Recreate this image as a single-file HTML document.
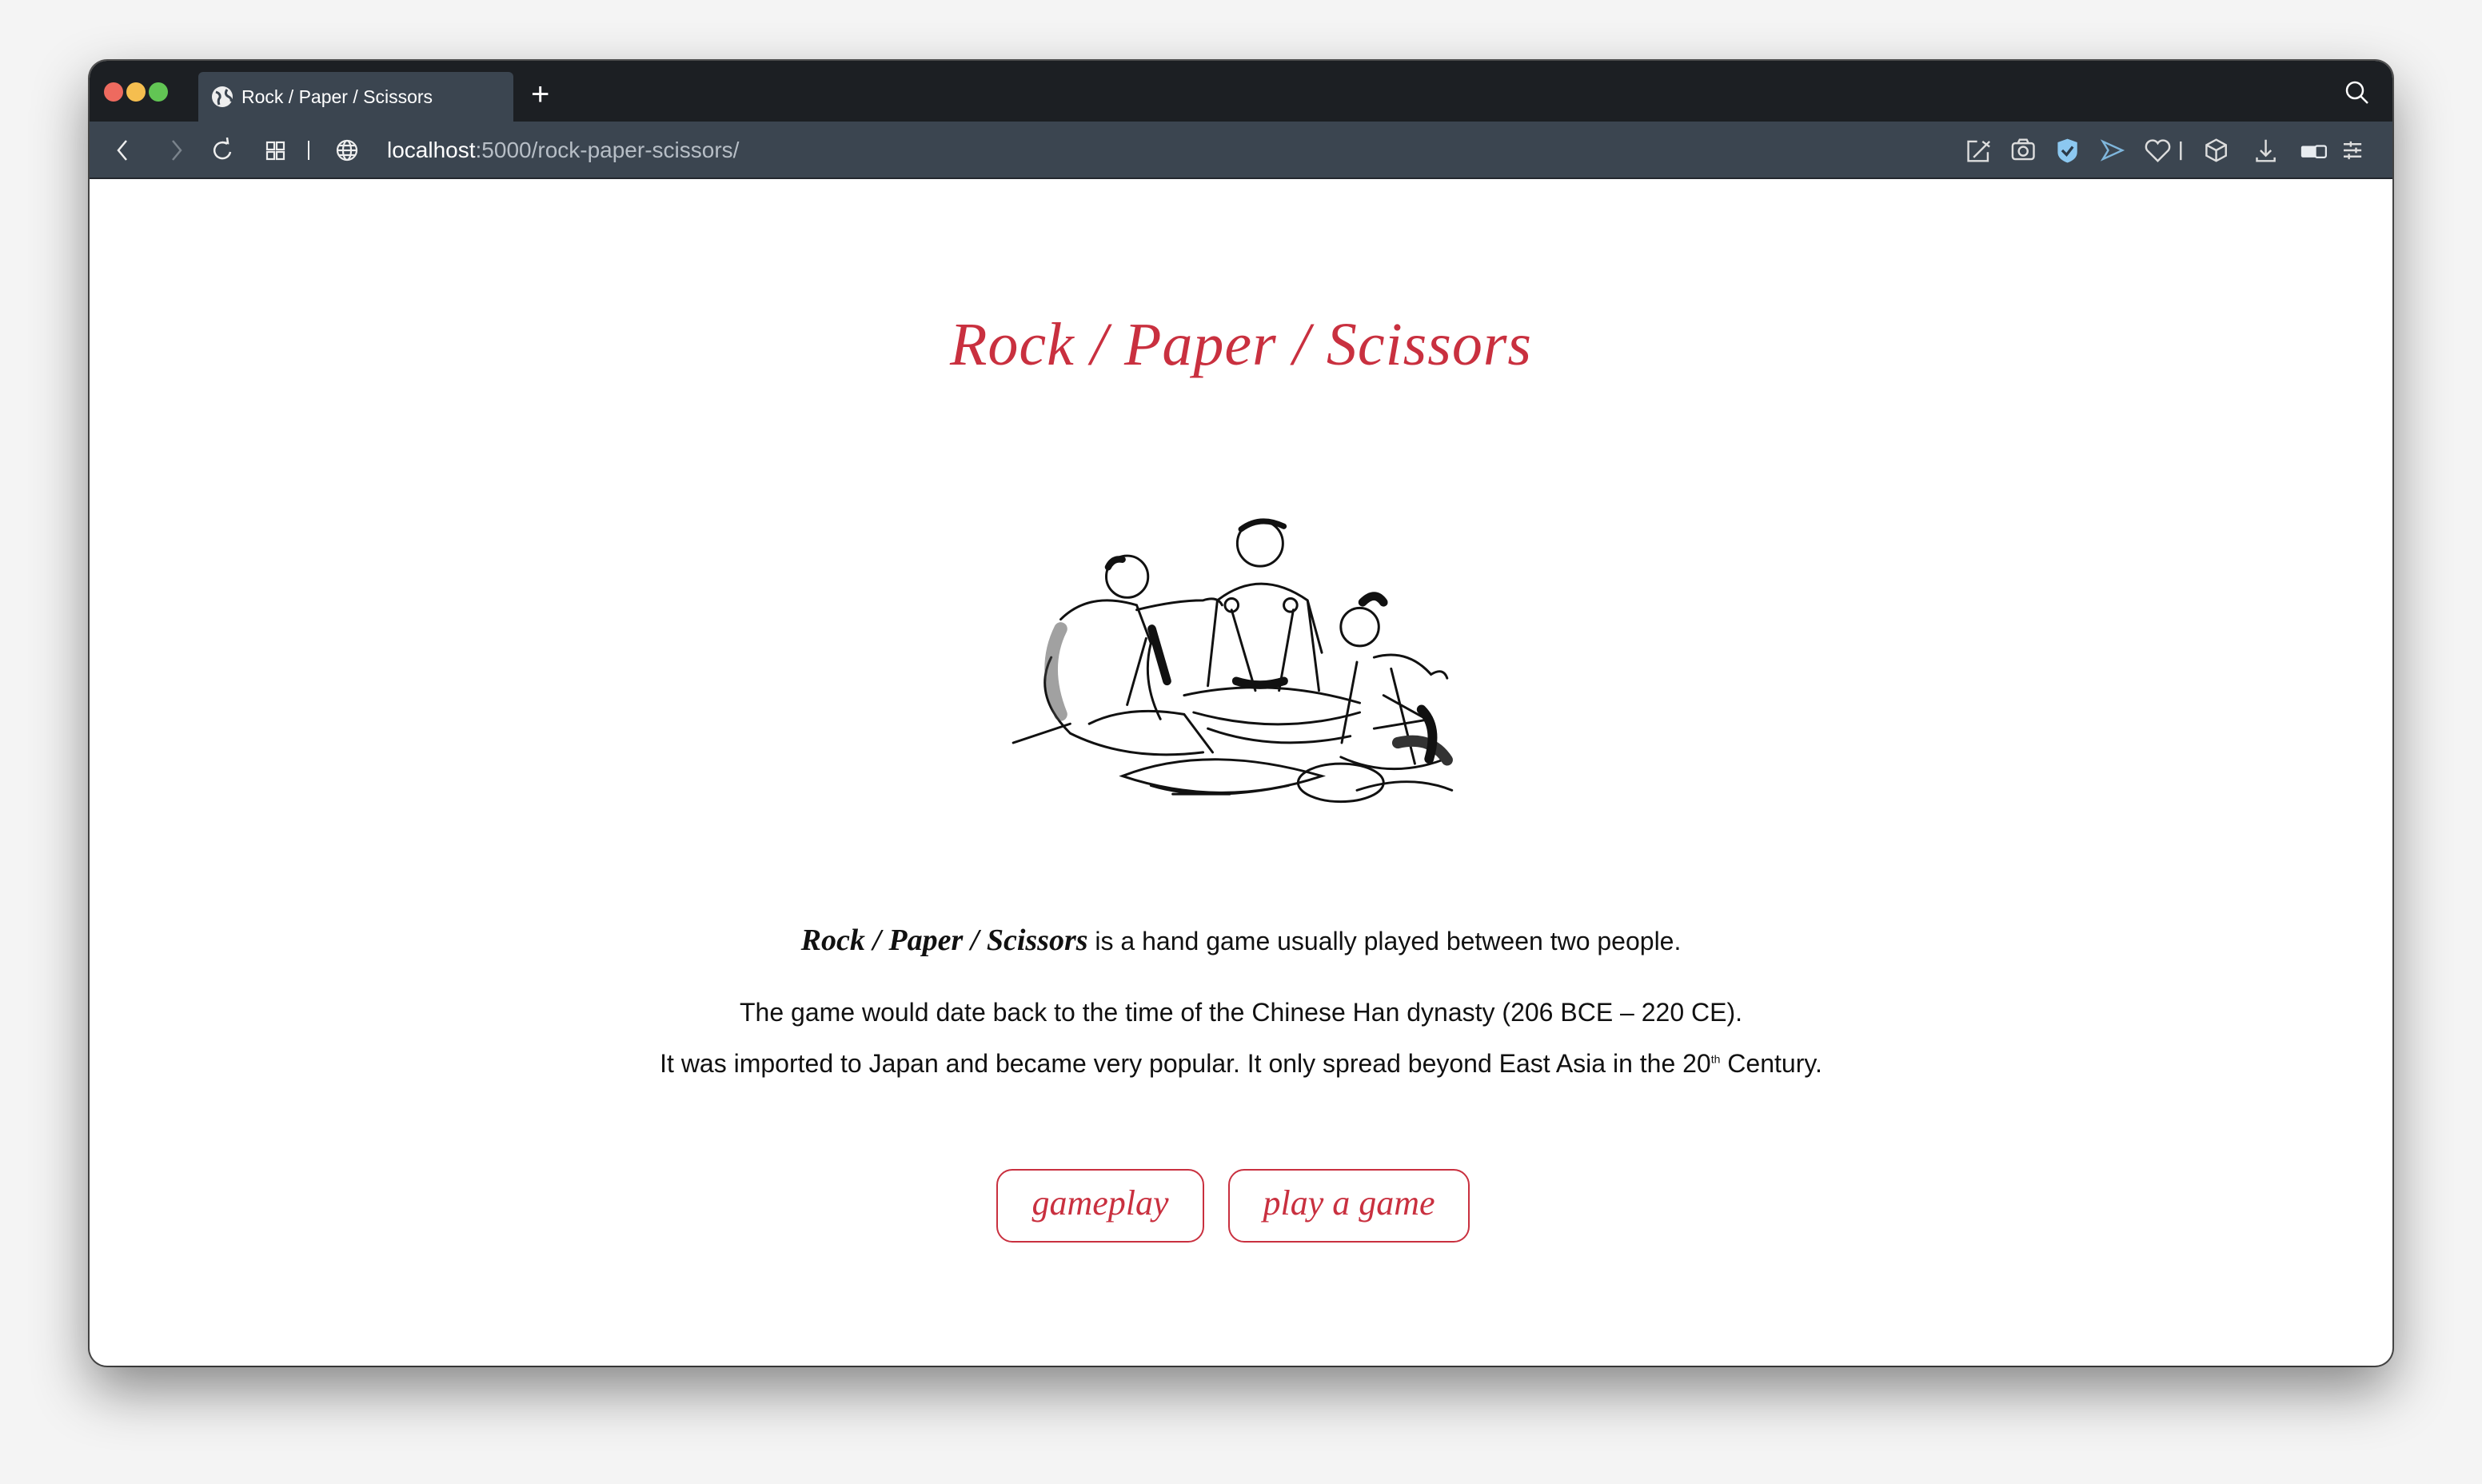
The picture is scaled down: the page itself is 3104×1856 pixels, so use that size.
<!DOCTYPE html>
<html><head><meta charset="utf-8">
<style>
*{margin:0;padding:0;box-sizing:border-box}
html,body{width:3104px;height:1856px;overflow:hidden;background:#f4f4f4;font-family:"Liberation Sans",sans-serif}
.win{position:absolute;left:112px;top:76px;width:2880px;height:1632px;border-radius:22px;overflow:hidden;background:#fff;box-shadow:0 30px 70px rgba(0,0,0,.45),0 0 0 2px #555}
.tabbar{position:absolute;left:0;top:0;width:100%;height:76px;background:#1c1f23}
.dot{position:absolute;top:27px;width:24px;height:24px;border-radius:50%}
.tab{position:absolute;left:136px;top:14px;width:394px;height:62px;background:#3b4550;border-radius:6px 6px 0 0;color:#fff;font-size:23px;line-height:62px;padding-left:54px}
.toolbar{position:absolute;left:0;top:76px;width:100%;height:72px;background:#3b4550;border-bottom:2px solid #22272d}
.url{position:absolute;left:372px;top:0;line-height:72px;font-size:28px;color:#fff}
.url span{color:#b7bec6}
.content{position:absolute;left:0;top:72px;width:100%;height:1484px}
h1{position:absolute;left:0;width:100%;top:240px;text-align:center;font-family:"Liberation Serif",serif;font-style:italic;font-weight:normal;font-size:76px;color:#c9303f;letter-spacing:1px}
p{position:absolute;left:0;width:100%;text-align:center;font-size:32px;color:#111}
.sc{font-family:"Liberation Serif",serif;font-style:italic;font-size:38px;font-weight:bold}
.btn{position:absolute;top:1314px;height:92px;border:2px solid #c9303f;border-radius:20px;color:#c9303f;font-family:"Liberation Serif",serif;font-style:italic;font-size:44px;text-align:center;line-height:82px}
</style></head><body>
<div class="win">
 <div class="tabbar">
  <div class="dot" style="left:18px;background:#ee6a5f"></div>
  <div class="dot" style="left:46px;background:#f5be4f"></div>
  <div class="dot" style="left:74px;background:#62c554"></div>
  <div class="tab"><svg style="position:absolute;left:16px;top:17px" width="28" height="28" viewBox="0 0 28 28"><circle cx="14" cy="14" r="13" fill="#eee"/><path d="M6 8 q6 2 5 7 q-3 3 -1 9 M20 5 q-4 6 2 9 q4 2 3 6" stroke="#3b4550" stroke-width="3" fill="none"/></svg>Rock / Paper / Scissors</div>
  <div style="position:absolute;left:552px;top:20px;color:#fff;font-size:40px;line-height:44px;font-weight:300">+</div>
  <svg style="position:absolute;right:28px;top:24px" width="32" height="32" viewBox="0 0 32 32"><circle cx="13" cy="13" r="10" stroke="#fff" stroke-width="2.5" fill="none"/><path d="M20 20 L29 29" stroke="#fff" stroke-width="2.5"/></svg>
 </div>
 <div class="toolbar">
  <svg style="position:absolute;left:0;top:0" width="360" height="72" viewBox="0 0 360 72">
   <path d="M46 24 L36 36 L46 48" stroke="#eee" stroke-width="2.5" fill="none"/>
   <path d="M104 24 L114 36 L104 48" stroke="#7a838c" stroke-width="2.5" fill="none"/>
   <path d="M172 28 A10 10 0 1 0 176 38" stroke="#eee" stroke-width="2.5" fill="none"/><path d="M166 26 L173 27 L172 20" stroke="#eee" stroke-width="2.5" fill="none"/>
   <g stroke="#eee" stroke-width="2.2" fill="none"><rect x="222" y="26" width="9" height="9"/><rect x="234" y="26" width="9" height="9"/><rect x="222" y="38" width="9" height="9"/><rect x="234" y="38" width="9" height="9"/></g>
   <path d="M274 24 V48" stroke="#eee" stroke-width="2"/>
   <g stroke="#eee" stroke-width="2.2" fill="none"><circle cx="322" cy="36" r="12"/><ellipse cx="322" cy="36" rx="5" ry="12"/><path d="M310 36 H334 M312 30 H332 M312 42 H332"/></g>
  </svg>
  <div class="url">localhost<span>:5000/rock-paper-scissors/</span></div>
  <svg style="position:absolute;right:30px;top:-4px" width="620" height="80" viewBox="0 0 560 72" fill="none" stroke="#ddd" stroke-width="2.2">
   <path d="M118 26 H108 V48 H130 V38 M114 44 L132 26 M124 26 L132 32"/>
   <rect x="158" y="28" width="24" height="18" rx="3"/><circle cx="170" cy="37" r="5"/><path d="M164 28 L166 24 H174 L176 28"/>
   <path d="M220 23 L231 27 V38 Q231 46 220 50 Q209 46 209 38 V27 Z" fill="#8cc8f0" stroke="none"/><path d="M214 36 L219 41 L226 32" stroke="#2b3a48" stroke-width="3"/>
   <path d="M260 26 L282 36 L260 46 L266 36 Z" stroke="#7fb6dc"/>
   <path d="M322 48 L310 36 A6 6 0 0 1 322 28 A6 6 0 0 1 334 36 Z"/>
   <path d="M348 26 V47"/>
   <path d="M388 24 L399 30 V42 L388 48 L377 42 V30 Z M377 30 L388 36 L399 30 M388 36 V48"/>
   <path d="M444 24 V42 M438 36 L444 42 L450 36 M434 44 V48 H454 V44"/>
   <rect x="484" y="31" width="26" height="13" rx="2" fill="#e8ecf0" stroke="none"/><rect x="500" y="31" width="12" height="13" rx="2" fill="#3b4550" stroke="#e8ecf0" stroke-width="2"/>
   <path d="M532 29 H552 M532 36 H552 M532 43 H552 M540 26 V32 M546 33 V39 M538 40 V46"/>
  </svg>
 </div>
 <div class="content">
  <h1>Rock / Paper / Scissors</h1>
  <svg style="position:absolute;left:1142px;top:496px" width="620" height="380" viewBox="0 0 520 320" fill="none" stroke="#111" stroke-width="2.5" stroke-linecap="round">
   <circle cx="130" cy="65" r="22"/>
   <path d="M110 55 q5 -10 15 -8" stroke-width="7"/>
   <path d="M60 110 q30 -30 80 -15 l15 40 q-10 40 10 80 M140 100 q40 -10 70 -10 q15 -5 20 5 M50 150 q-20 40 20 80 q60 30 140 20 M90 220 q40 -20 100 -10 l30 40 M10 240 q30 -10 60 -20 M150 130 l-20 70"/>
   <path d="M60 120 q-20 40 0 90" stroke="#444" stroke-width="14" opacity=".5"/>
   <path d="M156 120 l16 55" stroke-width="9"/>
   <circle cx="270" cy="30" r="24"/>
   <path d="M250 15 q20 -15 45 -3" stroke-width="6"/>
   <path d="M225 90 q45 -35 95 0 l15 55 M225 90 l-10 90 M320 90 l12 95 M240 100 l25 85 M305 100 l-15 85 M190 190 q90 -20 185 8 M200 208 q90 25 175 0 M215 225 q70 25 150 8"/>
   <path d="M245 175 q25 8 50 0" stroke-width="9"/>
   <circle cx="240" cy="95" r="7"/><circle cx="302" cy="95" r="7"/>
   <circle cx="375" cy="118" r="20"/>
   <path d="M378 92 q13 -13 22 0" stroke-width="9"/>
   <path d="M390 150 q35 -10 60 18 q13 -8 17 4 M372 155 l-16 85 M408 162 l25 100 M355 255 q55 25 115 0 M372 290 q55 -18 100 0 M400 190 l45 25 M390 225 l60 -10"/>
   <path d="M415 240 q35 -8 52 18" stroke-width="12" stroke="#333"/>
   <path d="M440 205 q18 18 8 52" stroke-width="10"/>
   <ellipse cx="355" cy="282" rx="45" ry="20"/>
   <path d="M125 275 q90 -35 210 0 q-105 35 -210 0 Z M155 285 q60 18 145 0 M178 294 h60"/>
  </svg>
  <p style="top:1006px"><span class="sc">Rock / Paper / Scissors</span> is a hand game usually played between two people.</p>
  <p style="top:1100px">The game would date back to the time of the Chinese Han dynasty (206 BCE – 220 CE).</p>
  <p style="top:1164px">It was imported to Japan and became very popular. It only spread beyond East Asia in the 20<sup style="font-size:14px">th</sup> Century.</p>
  <div class="btn" style="left:1134px;width:260px">gameplay</div>
  <div class="btn" style="left:1424px;width:302px">play a game</div>
 </div>
</div>
</body></html>
